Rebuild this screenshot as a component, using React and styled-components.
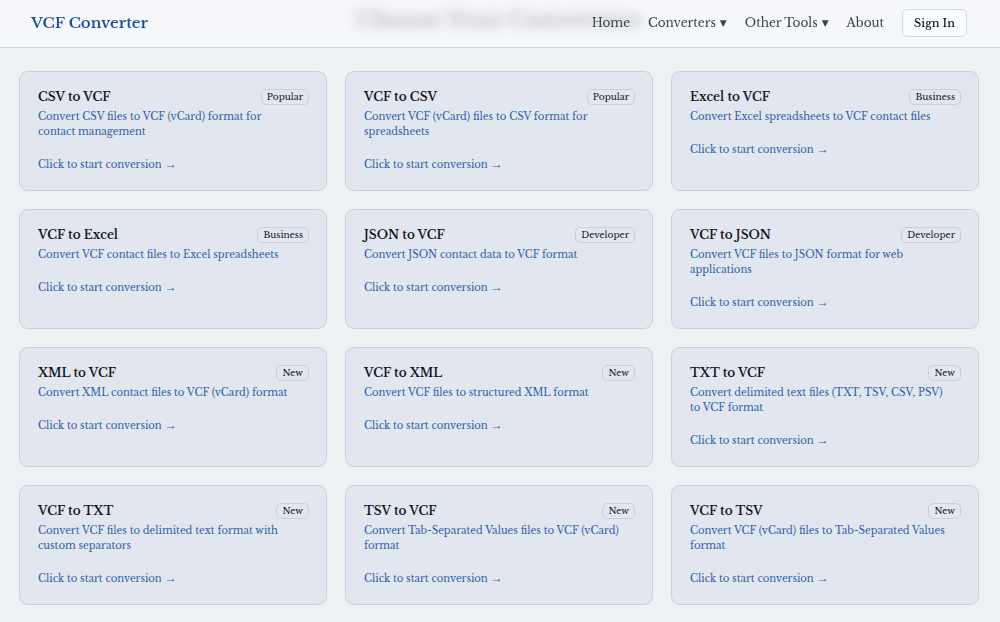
import styled, { createGlobalStyle } from "styled-components";

const GlobalStyle = createGlobalStyle`
  * {
    box-sizing: border-box;
  }

  body {
    margin: 0;
    background: #edf1f4;
    color: #0f1623;
    font-family: "Libre Baskerville", "Liberation Serif", serif;
  }
`;

const Header = styled.header`
  position: fixed;
  top: 0;
  left: 0;
  right: 0;
  z-index: 10;
  height: 48px;
  padding: 0 33px 2px 31px;
  display: flex;
  align-items: center;
  justify-content: space-between;
  background: rgba(249, 250, 254, 0.7);
  backdrop-filter: blur(6px);
  border-bottom: 1px solid #ced5df;
`;

const Logo = styled.a`
  color: #1d4f99;
  font-size: 15px;
  font-weight: 600;
  line-height: 20px;
  text-decoration: none;
`;

const Nav = styled.nav`
  display: flex;
  align-items: center;
  gap: 18px;
`;

const NavLink = styled.a`
  color: #3a424e;
  font-size: 12px;
  line-height: 16px;
  text-decoration: none;

  &:hover {
    color: #1d4f99;
  }
`;

const NavMenuButton = styled.button`
  display: flex;
  align-items: center;
  gap: 4px;
  padding: 0;
  border: 0;
  background: transparent;
  color: #3a424e;
  font-family: inherit;
  font-size: 12px;
  line-height: 16px;
  cursor: pointer;
`;

const Caret = styled.span`
  font-family: "DejaVu Sans", sans-serif;
  font-size: 9px;
`;

const SignInButton = styled.button`
  height: 28px;
  padding: 0 11px;
  border: 1px solid #d3d9e2;
  border-radius: 5px;
  background: #f9fbfc;
  color: #0f1623;
  font-family: inherit;
  font-size: 11px;
  font-weight: 500;
  line-height: 16px;
  cursor: pointer;
`;

const Main = styled.main`
  padding: 4px 21px 16px 19px;
`;

const PageTitle = styled.h1`
  margin: 0 0 35px;
  font-size: 22px;
  font-weight: bold;
  line-height: 32px;
  text-align: center;
`;

const CardGrid = styled.div`
  display: grid;
  grid-template-columns: repeat(3, 1fr);
  gap: 18px;

  @media (max-width: 800px) {
    grid-template-columns: 1fr;
  }
`;

const Card = styled.article`
  padding: 17px 17px 18px 18px;
  border: 1px solid #cad0db;
  border-radius: 9px;
  background: #e2e6ee;
`;

const CardHeader = styled.div`
  display: flex;
  align-items: center;
  justify-content: space-between;
  margin-bottom: 4px;
`;

const CardTitle = styled.h2`
  margin: 0;
  font-size: 12px;
  font-weight: 600;
  line-height: 16px;
`;

const Badge = styled.span`
  padding: 0 5px;
  border: 1px solid #cad0db;
  border-radius: 5px;
  font-size: 9px;
  line-height: 14px;
`;

const CardText = styled.p`
  margin: 0 0 18px;
  padding-right: 11px;
  color: #2f5fa8;
  font-size: 10px;
  line-height: 15px;
`;

const CardLink = styled.a`
  display: block;
  color: #2f5fa8;
  font-size: 10px;
  line-height: 15px;
  text-decoration: none;

  &:hover {
    text-decoration: underline;
  }
`;

const Arrow = styled.span`
  font-family: "Liberation Serif", serif;
  font-size: 12px;
  line-height: 12px;
`;

const converters = [
  { title: "CSV to VCF", badge: "Popular", text: "Convert CSV files to VCF (vCard) format for contact management" },
  { title: "VCF to CSV", badge: "Popular", text: "Convert VCF (vCard) files to CSV format for spreadsheets" },
  { title: "Excel to VCF", badge: "Business", text: "Convert Excel spreadsheets to VCF contact files" },
  { title: "VCF to Excel", badge: "Business", text: "Convert VCF contact files to Excel spreadsheets" },
  { title: "JSON to VCF", badge: "Developer", text: "Convert JSON contact data to VCF format" },
  { title: "VCF to JSON", badge: "Developer", text: "Convert VCF files to JSON format for web applications" },
  { title: "XML to VCF", badge: "New", text: "Convert XML contact files to VCF (vCard) format" },
  { title: "VCF to XML", badge: "New", text: "Convert VCF files to structured XML format" },
  { title: "TXT to VCF", badge: "New", text: "Convert delimited text files (TXT, TSV, CSV, PSV) to VCF format" },
  { title: "VCF to TXT", badge: "New", text: "Convert VCF files to delimited text format with custom separators" },
  { title: "TSV to VCF", badge: "New", text: "Convert Tab-Separated Values files to VCF (vCard) format" },
  { title: "VCF to TSV", badge: "New", text: "Convert VCF (vCard) files to Tab-Separated Values format" },
];

const toPath = (title) => `#${title.toLowerCase().replaceAll(" ", "-")}`;

const ConverterCard = ({ title, badge, text }) => {
  return (
    <Card>
      <CardHeader>
        <CardTitle>{title}</CardTitle>
        <Badge>{badge}</Badge>
      </CardHeader>
      <CardText>{text}</CardText>
      <CardLink href={toPath(title)}>
        Click to start conversion <Arrow>→</Arrow>
      </CardLink>
    </Card>
  );
};

export default function App() {
  return (
    <>
      <GlobalStyle />
      <Header>
        <Logo href="#">VCF Converter</Logo>
        <Nav>
          <NavLink href="#home">Home</NavLink>
          <NavMenuButton type="button">
            Converters <Caret>▼</Caret>
          </NavMenuButton>
          <NavMenuButton type="button">
            Other Tools <Caret>▼</Caret>
          </NavMenuButton>
          <NavLink href="#about">About</NavLink>
          <SignInButton type="button">Sign In</SignInButton>
        </Nav>
      </Header>
      <Main>
        <PageTitle>Choose Your Conversion</PageTitle>
        <CardGrid>
          {converters.map((item) => (
            <ConverterCard key={item.title} {...item} />
          ))}
        </CardGrid>
      </Main>
    </>
  );
}
